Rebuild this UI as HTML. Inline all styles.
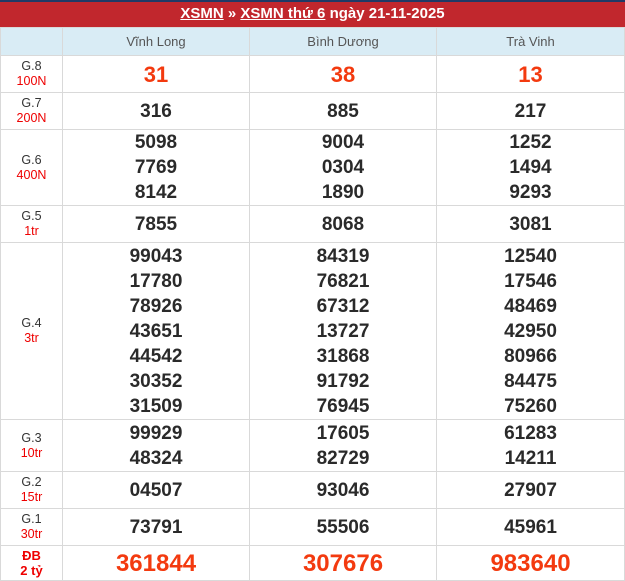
<!DOCTYPE html>
<html><head><meta charset="utf-8"><style>
*{margin:0;padding:0;box-sizing:border-box}
body{width:625px;height:581px;background:#fff;font-family:"Liberation Sans",Arial,sans-serif;position:relative;overflow:hidden}
.top{position:absolute;left:0;top:0;width:625px;height:2px;background:#1f3a66}
.hd{position:absolute;left:0;top:2px;width:625px;height:25px;background:#c1272d;color:#fff;font-weight:bold;font-size:15px;text-align:center;line-height:24px}
.hd u{text-decoration:underline}
table{position:absolute;left:0;top:27px;border-collapse:collapse;table-layout:fixed;width:625px}
td{border:1px solid #d9d9d9;text-align:center;vertical-align:middle;padding:0}
tr.h td{background:#d9ecf5;color:#555;font-size:13px;height:28px}
td.l{font-size:12.5px;color:#333;line-height:15px}
td.l span{color:#e00}
td.n{font-weight:bold;font-size:19px;color:#2a2a2a;line-height:25px}
td.r{color:#f33a0f;font-size:22px}
td.db{color:#f33a0f;font-size:24px}
td.ld{color:#e00;font-weight:bold;font-size:13px;line-height:15px}
</style></head><body>
<div class="top"></div>
<div class="hd"><u>XSMN</u> » <u>XSMN thứ 6</u> ngày 21-11-2025</div>
<table>
<colgroup><col style="width:62px"><col style="width:187px"><col style="width:187px"><col style="width:188px"></colgroup>
<tr class="h"><td></td><td>Vĩnh Long</td><td>Bình Dương</td><td>Trà Vinh</td></tr>
<tr style="height:37px"><td class="l">G.8<br><span>100N</span></td><td class="n r">31</td><td class="n r">38</td><td class="n r">13</td></tr>
<tr style="height:37px"><td class="l">G.7<br><span>200N</span></td><td class="n">316</td><td class="n">885</td><td class="n">217</td></tr>
<tr style="height:76px"><td class="l">G.6<br><span>400N</span></td><td class="n">5098<br>7769<br>8142</td><td class="n">9004<br>0304<br>1890</td><td class="n">1252<br>1494<br>9293</td></tr>
<tr style="height:37px"><td class="l">G.5<br><span>1tr</span></td><td class="n">7855</td><td class="n">8068</td><td class="n">3081</td></tr>
<tr style="height:177px"><td class="l">G.4<br><span>3tr</span></td><td class="n">99043<br>17780<br>78926<br>43651<br>44542<br>30352<br>31509</td><td class="n">84319<br>76821<br>67312<br>13727<br>31868<br>91792<br>76945</td><td class="n">12540<br>17546<br>48469<br>42950<br>80966<br>84475<br>75260</td></tr>
<tr style="height:52px"><td class="l">G.3<br><span>10tr</span></td><td class="n">99929<br>48324</td><td class="n">17605<br>82729</td><td class="n">61283<br>14211</td></tr>
<tr style="height:37px"><td class="l">G.2<br><span>15tr</span></td><td class="n">04507</td><td class="n">93046</td><td class="n">27907</td></tr>
<tr style="height:37px"><td class="l">G.1<br><span>30tr</span></td><td class="n">73791</td><td class="n">55506</td><td class="n">45961</td></tr>
<tr style="height:35px"><td class="ld">ĐB<br>2 tỷ</td><td class="n db">361844</td><td class="n db">307676</td><td class="n db">983640</td></tr>
</table>
</body></html>
